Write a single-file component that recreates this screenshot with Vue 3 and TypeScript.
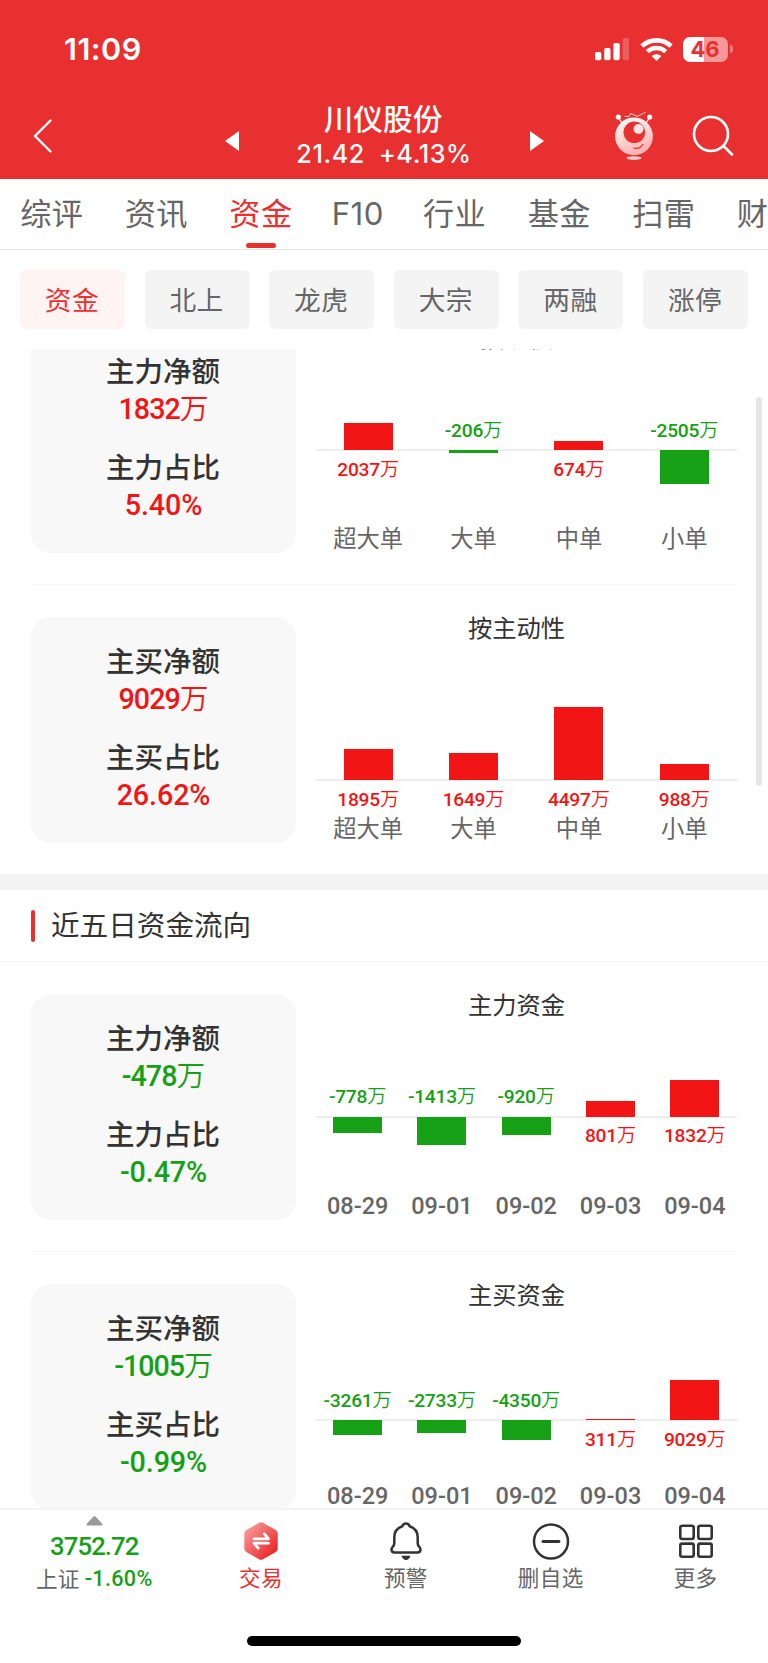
<script setup lang="ts">
interface Bar {
  label: string
  value: string
  height: number
  down?: boolean
}
interface Flow {
  card: { label: string; value: string; unit?: string }[]
  down?: boolean
  title: string
  upper: number
  dates?: boolean
  bars: Bar[]
}

const tabs = ['综评', '资讯', '资金', 'F10', '行业', '基金', '扫雷', '财务']
const activeTab = '资金'
const chips = ['资金', '北上', '龙虎', '大宗', '两融', '涨停']
const activeChip = '资金'

const today: Flow[] = [
  {
    card: [
      { label: '主力净额', value: '1832', unit: '万' },
      { label: '主力占比', value: '5.40%' },
    ],
    title: '按规模',
    upper: 101,
    bars: [
      { label: '超大单', value: '2037', height: 27.5 },
      { label: '大单', value: '-206', height: 3, down: true },
      { label: '中单', value: '674', height: 9 },
      { label: '小单', value: '-2505', height: 34, down: true },
    ],
  },
  {
    card: [
      { label: '主买净额', value: '9029', unit: '万' },
      { label: '主买占比', value: '26.62%' },
    ],
    title: '按主动性',
    upper: 141,
    bars: [
      { label: '超大单', value: '1895', height: 31 },
      { label: '大单', value: '1649', height: 27 },
      { label: '中单', value: '4497', height: 73 },
      { label: '小单', value: '988', height: 16 },
    ],
  },
]

const fiveDays: Flow[] = [
  {
    card: [
      { label: '主力净额', value: '-478', unit: '万' },
      { label: '主力占比', value: '-0.47%' },
    ],
    down: true,
    title: '主力资金',
    upper: 100.5,
    dates: true,
    bars: [
      { label: '08-29', value: '-778', height: 16, down: true },
      { label: '09-01', value: '-1413', height: 28.5, down: true },
      { label: '09-02', value: '-920', height: 18.5, down: true },
      { label: '09-03', value: '801', height: 16 },
      { label: '09-04', value: '1832', height: 37 },
    ],
  },
  {
    card: [
      { label: '主买净额', value: '-1005', unit: '万' },
      { label: '主买占比', value: '-0.99%' },
    ],
    down: true,
    title: '主买资金',
    upper: 114,
    dates: true,
    bars: [
      { label: '08-29', value: '-3261', height: 14.5, down: true },
      { label: '09-01', value: '-2733', height: 12.5, down: true },
      { label: '09-02', value: '-4350', height: 19.5, down: true },
      { label: '09-03', value: '311', height: 1.5 },
      { label: '09-04', value: '9029', height: 40.5 },
    ],
  },
]

const sections = [
  { title: '', flows: today },
  { title: '近五日资金流向', flows: fiveDays },
]
</script>

<template>
  <div class="app">
    <header class="top">
      <div class="status">
        <span class="clock">11:09</span>
        <div class="status-icons">
          <svg class="signal" width="35" height="24" viewBox="0 0 35 24" fill="#fff">
            <rect x="0" y="15" width="6.3" height="8.3" rx="1.8" />
            <rect x="9.2" y="11" width="6.3" height="12.3" rx="1.8" />
            <rect x="18.4" y="6" width="6.3" height="17.3" rx="1.8" />
            <rect x="27.7" y="1" width="6.3" height="22.3" rx="1.8" opacity=".22" />
          </svg>
          <svg class="wifi" width="33" height="24" viewBox="0 0 33 24" fill="none" stroke="#fff">
            <path d="M1.9 9.2a21.2 21.2 0 0 1 29.2 0" stroke-width="4.6" />
            <path d="M7.3 14.7a13.4 13.4 0 0 1 18.4 0" stroke-width="4.4" />
            <path d="M11.6 19.1a7.4 7.4 0 0 1 9.8 0L16.5 24z" fill="#fff" stroke="none" />
          </svg>
          <div class="battery"><span class="cell">46</span><i class="nub"></i></div>
        </div>
      </div>
      <div class="nav">
        <svg class="back" width="20" height="36" viewBox="0 0 20 36" fill="none" stroke="#fff" stroke-width="2.4" stroke-linecap="round" stroke-linejoin="round">
          <path d="M17.5 2.5 2 18l15.5 15.500" />
        </svg>
        <svg class="prev" width="14" height="20" viewBox="0 0 14 20"><path d="M0 10 14 0v20z" fill="#fff" /></svg>
        <div class="stock">
          <div class="stock-name">川仪股份</div>
          <div class="stock-price"><span>21.42</span><span>+4.13%</span></div>
        </div>
        <svg class="next" width="14" height="20" viewBox="0 0 14 20"><path d="M14 10 0 0v20z" fill="#fff" /></svg>
        <svg class="robot" width="40" height="50" viewBox="0 0 40 50">
          <defs>
            <linearGradient id="robotBody" x1="0" y1="0" x2=".4" y2="1">
              <stop offset="0" stop-color="#fff" />
              <stop offset="1" stop-color="#fbb4b4" />
            </linearGradient>
          </defs>
          <g stroke="#fff" fill="none" stroke-width="1.2">
            <path d="m4 6 4 6M36 6l-4 6" />
            <path d="m10.500 5.300 4.500.2 1.500-3 7 2.800 8-4" stroke-width=".8" />
          </g>
          <circle cx="4.300" cy="6" r="2.600" fill="#fff" />
          <circle cx="35.700" cy="6" r="2.600" fill="#fff" />
          <circle cx="20" cy="25.300" r="18.900" fill="url(#robotBody)" />
          <circle cx="20.300" cy="21.300" r="10.800" fill="#e93030" />
          <circle cx="24.500" cy="18" r="5" fill="#fde3e3" />
          <path d="M19.300 37q7 1.800 9.700-4" fill="none" stroke="#e93030" stroke-width="1.200" />
          <ellipse cx="20" cy="47" rx="7.500" ry="1.800" fill="#fbd0d0" />
        </svg>
        <svg class="search" width="42" height="42" viewBox="0 0 42 42" fill="none" stroke="#fff" stroke-width="2.600" stroke-linecap="round">
          <circle cx="19" cy="19" r="17" />
          <path d="m31.500 31 8.500 8.500" />
        </svg>
      </div>
    </header>

    <nav class="tabs">
      <span v-for="tab in tabs" :key="tab" class="tab" :class="{ active: tab === activeTab, latin: tab === 'F10' }">{{ tab }}</span>
    </nav>

    <div class="chips">
      <span v-for="chip in chips" :key="chip" class="chip" :class="{ active: chip === activeChip }">{{ chip }}</span>
    </div>

    <main class="scroll">
      <div class="content">
        <section v-for="section in sections" :key="section.title">
          <h2 v-if="section.title" class="heading">{{ section.title }}</h2>
          <div v-for="flow in section.flows" :key="flow.title" class="flow">
            <div class="card" :class="{ down: flow.down }">
              <div v-for="item in flow.card" :key="item.label" class="metric">
                <div class="metric-label">{{ item.label }}</div>
                <div class="metric-value" :class="{ percent: !item.unit }">{{ item.value }}<span v-if="item.unit" class="unit">{{ item.unit }}</span></div>
              </div>
            </div>
            <div class="panel">
              <h3 class="panel-title">{{ flow.title }}</h3>
              <div class="plot">
                <div v-for="bar in flow.bars" :key="bar.label" class="column" :class="{ down: bar.down }">
                  <div class="upper" :style="{ height: flow.upper + 'px' }">
                    <span v-if="bar.down" class="amount">{{ bar.value }}<span class="unit">万</span></span>
                    <i v-else class="bar" :style="{ height: bar.height + 'px' }"></i>
                  </div>
                  <div class="lower">
                    <i v-if="bar.down" class="bar" :style="{ height: bar.height + 'px' }"></i>
                    <span v-else class="amount">{{ bar.value }}<span class="unit">万</span></span>
                  </div>
                  <span class="tick" :class="{ date: flow.dates }">{{ bar.label }}</span>
                </div>
              </div>
            </div>
          </div>
        </section>
      </div>
      <i class="scrollbar"></i>
    </main>

    <footer class="dock">
      <div class="dock-items">
        <div class="index">
          <svg class="caret" width="17" height="10" viewBox="0 0 17 10"><path d="M7.500.6q1-1 2 0l6.700 7.200q1 1.800-.8 1.800H1.600q-1.800 0-.8-1.800z" fill="#999" /></svg>
          <span class="index-value">3752.72</span>
          <span class="index-row"><span>上证</span><span class="index-change">-1.60%</span></span>
        </div>
        <div class="action trade">
          <svg width="38" height="40" viewBox="0 0 38 40">
            <defs>
              <linearGradient id="tradeFill" x1=".1" y1=".1" x2=".9" y2=".9">
                <stop offset="0" stop-color="#f89a9a" />
                <stop offset="1" stop-color="#e92222" />
              </linearGradient>
            </defs>
            <path d="M17 1.800q2-1.200 4 0l12.700 7.300q2 1.100 2 3.400v15q0 2.300-2 3.400L21 38.200q-2 1.200-4 0L4.300 30.900q-2-1.100-2-3.400v-15q0-2.300 2-3.400z" fill="url(#tradeFill)" />
            <path d="M12 17.800h14.500l-4.200-5M26.500 22.200H12l4.200 5" fill="none" stroke="#fff" stroke-width="2.800" stroke-linecap="round" stroke-linejoin="round" />
          </svg>
          <span>交易</span>
        </div>
        <div class="action">
          <svg width="38" height="40" viewBox="0 0 38 40" fill="none" stroke="#333" stroke-width="2.500" stroke-linejoin="round">
            <path d="M19 2.500c-2 0-3.200 1.200-3.700 2.800C10.500 7 7.300 10.800 7.300 16.200v6.300c0 1.200-.4 2-1.500 3.200-1.200 1.400-1.500 2.500-1.200 3.700.3 1.300 1.300 2 2.700 2h23.400c1.400 0 2.400-.7 2.700-2 .3-1.200 0-2.300-1.200-3.700-1.100-1.200-1.500-2-1.500-3.200v-6.300c0-5.400-3.200-9.200-8-10.900-.5-1.600-1.700-2.800-3.700-2.800z" />
            <path d="M14.500 34.800h9c-.8 2.600-2.400 4.200-4.500 4.200s-3.700-1.600-4.500-4.200z" fill="#333" stroke="none" />
          </svg>
          <span>预警</span>
        </div>
        <div class="action">
          <svg width="38" height="40" viewBox="0 0 38 40" fill="none" stroke="#333" stroke-width="2.500" stroke-linecap="round">
            <circle cx="19" cy="20.500" r="17" />
            <path d="M11 20.500h16" stroke-width="2.800" />
          </svg>
          <span>删自选</span>
        </div>
        <div class="action">
          <svg width="38" height="40" viewBox="0 0 38 40" fill="none" stroke="#333" stroke-width="2.600">
            <rect x="3.300" y="4.800" width="13.400" height="13.200" rx="2" />
            <rect x="21.300" y="4.800" width="13.400" height="13.200" rx="2" />
            <rect x="3.300" y="22.600" width="13.400" height="13.200" rx="2" />
            <rect x="21.300" y="22.600" width="13.400" height="13.200" rx="2" />
          </svg>
          <span>更多</span>
        </div>
      </div>
      <i class="home"></i>
    </footer>
  </div>
</template>

<style>
body {
  margin: 0;
  background: #fff;
}
</style>

<style scoped>
.app {
  display: flex;
  flex-direction: column;
  width: 768px;
  height: 1663px;
  overflow: hidden;
  background: #fff;
  color: #666;
  font-family: Inter, 'Noto Sans CJK SC', sans-serif;
}
.top {
  flex: none;
  height: 179px;
  background: #e93030;
  color: #fff;
}
.status {
  display: flex;
  justify-content: space-between;
  align-items: center;
  height: 98px;
  padding: 0 35.500px 0 64px;
}
.clock {
  margin-top: -1px;
  font-size: 30.5px;
  font-weight: 600;
  line-height: 36px;
  letter-spacing: 0.5px;
}
.status-icons {
  display: flex;
  align-items: center;
  gap: 10px;
}
.battery {
  display: flex;
  align-items: center;
  gap: 2px;
}
.cell {
  width: 45px;
  height: 25px;
  border-radius: 7px;
  background: linear-gradient(90deg, #fff 21px, #f69898 21px);
  color: #e93030;
  font-size: 22px;
  font-weight: 700;
  line-height: 25px;
  text-align: center;
}
.nub {
  width: 3px;
  height: 8px;
  border-radius: 0 3px 3px 0;
  background: #f07c7c;
}
.nav {
  display: flex;
  align-items: center;
  height: 76px;
  padding: 0 35px 0 32.5px;
}
.back {
  flex: none;
}
.prev {
  flex: none;
  margin: 10px 0 0 172px;
}
.stock {
  display: flex;
  flex: none;
  flex-direction: column;
  align-items: center;
  width: 291px;
  margin-top: -1px;
}
.stock-name {
  margin-left: -2px;
  font-size: 29.7px;
  font-weight: 500;
  line-height: 37px;
}
.stock-price {
  display: flex;
  gap: 14px;
  font-size: 25.2px;
  font-weight: 500;
  letter-spacing: 0.6px;
  line-height: 33px;
}
.next {
  flex: none;
  margin-top: 10px;
}
.robot {
  flex: none;
  margin: 0 0 0 70.5px;
}
.search {
  flex: none;
  margin: 0 0 0 37.500px;
}
.tabs {
  display: flex;
  flex: none;
  gap: 41.1px;
  box-sizing: border-box;
  height: 71px;
  padding-left: 20px;
  border-bottom: 1px solid #e6e6e6;
  overflow: hidden;
  font-size: 31.2px;
  line-height: 70px;
  letter-spacing: 0.4px;
  white-space: nowrap;
}
.tab {
  display: flex;
  flex: none;
  flex-direction: column;
  align-items: center;
  width: 63.5px;
}
.tab.latin {
  width: 48px;
}
.tab.active {
  color: #e93030;
}
.tab.active::after {
  content: '';
  width: 30px;
  height: 5px;
  margin-top: -6px;
  border-radius: 3px;
  background: #e93030;
}
.chips {
  display: grid;
  flex: none;
  grid-template-columns: repeat(6, 1fr);
  gap: 19.7px;
  height: 59px;
  padding: 20px 20px;
}
.chip {
  height: 59px;
  border-radius: 6px;
  background: #f4f4f4;
  font-size: 26.7px;
  line-height: 60px;
  letter-spacing: 0.4px;
  text-indent: -1px;
  text-align: center;
}
.chip.active {
  background: #fff3f3;
  color: #e93030;
}
.scroll {
  position: relative;
  flex: none;
  height: 1159px;
  overflow: hidden;
}
.content {
  margin-top: -54px;
}
.scrollbar {
  position: absolute;
  top: 48px;
  right: 6px;
  width: 6px;
  height: 389px;
  border-radius: 3px;
  background: #e6e6e6;
}
.heading {
  display: flex;
  align-items: center;
  gap: 16px;
  height: 71px;
  margin: 0;
  padding-left: 31px;
  border-top: 16px solid #f4f4f4;
  border-bottom: 1px solid #f4f4f4;
  color: #333;
  font-size: 28.6px;
  font-weight: 400;
  line-height: 41px;
}
.heading::before {
  content: '';
  width: 4px;
  height: 32px;
  border-radius: 2px;
  background: #e93030;
}
.flow {
  display: flex;
  margin: 0 31px;
  padding: 32px 0 31px;
  border-bottom: 1px solid #f5f5f5;
}
.flow:last-child {
  border-bottom: 0;
}
.card {
  box-sizing: border-box;
  width: 265px;
  height: 226px;
  padding-top: 26px;
  border-radius: 20px;
  background: #f8f8f8;
  color: #f21515;
  text-align: center;
}
.card.down {
  color: #16a016;
}
.metric {
  margin-bottom: 20px;
  line-height: 38px;
}
.metric-label {
  margin-right: 1px;
  color: #333;
  font-size: 28.5px;
  font-weight: 500;
}
.metric-value {
  height: 38px;
  font-family: Roboto, 'Noto Sans CJK SC', sans-serif;
  font-size: 28.7px;
  font-weight: 500;
  line-height: 37px;
  letter-spacing: -1px;
}
.metric-value.percent {
  letter-spacing: -0.1px;
}
.unit {
  font-weight: 350;
  letter-spacing: 0;
}
.panel {
  display: flex;
  flex: 1;
  flex-direction: column;
  height: 226px;
}
.panel-title {
  margin: 0;
  color: #333;
  font-size: 24.3px;
  font-weight: 400;
  line-height: 22px;
  text-align: center;
}
.plot {
  display: flex;
  flex: 1;
  margin-left: 19.5px;
}
.column {
  display: flex;
  flex: 1;
  flex-direction: column;
  align-items: center;
  width: 0;
  color: #f21515;
}
.column.down {
  color: #16a016;
}
.upper,
.lower {
  display: flex;
  flex-direction: column;
  align-items: center;
  box-sizing: border-box;
  width: 100%;
}
.upper {
  justify-content: flex-end;
  border-bottom: 1px solid #eee;
}
.lower {
  flex: 1;
  height: 0;
  border-top: 1px solid #eee;
}
.bar {
  flex: none;
  width: 49px;
  background: currentColor;
}
.upper .bar {
  margin-bottom: -1px;
}
.lower .bar {
  margin-top: -1px;
}
.amount {
  font-family: Roboto, 'Noto Sans CJK SC', sans-serif;
  font-size: 19.2px;
  font-weight: 500;
  letter-spacing: -0.25px;
  line-height: 20px;
  white-space: nowrap;
}
.upper .amount {
  margin-bottom: 8.500px;
}
.lower .amount {
  margin-top: 8.500px;
}
.tick {
  color: #666;
  font-size: 23.3px;
  line-height: 28px;
}
.tick.date {
  font-family: Roboto, sans-serif;
  font-size: 23.5px;
  font-weight: 500;
  letter-spacing: 0;
}
.dock {
  flex: none;
  height: 155px;
  box-sizing: border-box;
  border-top: 2px solid #f4f4f4;
  background: #fff;
}
.dock-items {
  display: flex;
  height: 126px;
  font-size: 21.6px;
  letter-spacing: 0.3px;
}
.index {
  display: flex;
  flex-direction: column;
  align-items: center;
  box-sizing: border-box;
  width: 188.500px;
  padding-top: 5.500px;
}
.index-value {
  margin-top: 5px;
  color: #16a016;
  font-family: Roboto, sans-serif;
  font-size: 25.7px;
  font-weight: 500;
  letter-spacing: -0.9px;
  line-height: 30px;
}
.index-row {
  display: flex;
  gap: 5px;
  margin-top: 3.500px;
  line-height: 30px;
}
.index-change {
  color: #16a016;
  font-family: Roboto, sans-serif;
  font-weight: 500;
}
.action {
  display: flex;
  flex: 1;
  flex-direction: column;
  align-items: center;
  gap: 2px;
  padding-top: 11px;
  line-height: 30px;
}
.trade {
  color: #e93030;
}
.home {
  display: block;
  width: 274px;
  height: 10px;
  margin: 0 auto;
  border-radius: 5px;
  background: #000;
}
</style>
